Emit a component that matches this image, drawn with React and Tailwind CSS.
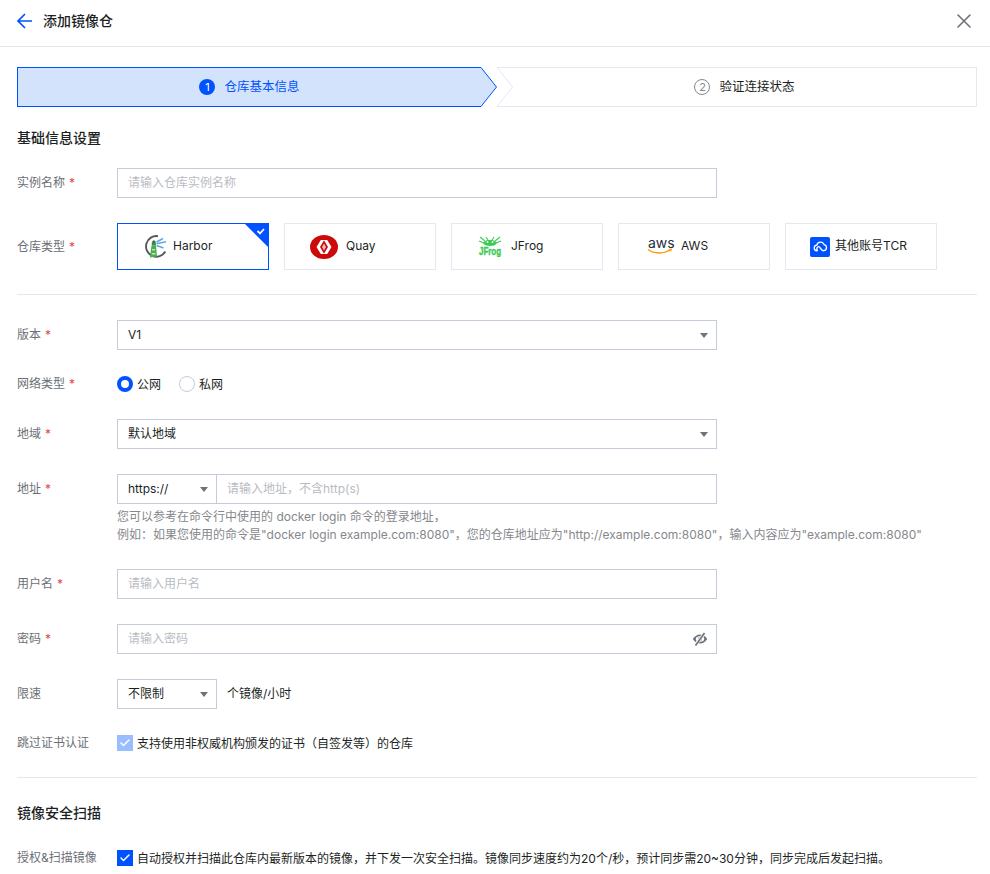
import { X, Check } from "lucide-react";

function Label({ text, required }) {
  return (
    <div className="w-[100px] shrink-0 text-xs leading-5 text-[#6b6f76]">
      {text}
      {required && <span className="ml-1 text-[#e54545]">*</span>}
    </div>
  );
}

function Caret() {
  return <span className="h-0 w-0 border-x-[4px] border-t-[5px] border-x-transparent border-t-[#6f7278]" />;
}

function TextInput({ placeholder, children }) {
  return (
    <div className="flex h-[30px] w-[600px] items-center justify-between border border-[#c5cbdb] pl-[10px] pr-2 text-xs text-[#b9bcc2]">
      {placeholder}
      {children}
    </div>
  );
}

function Select({ value, width }) {
  return (
    <div className={`flex h-[30px] items-center justify-between border border-[#c5cbdb] pl-[10px] pr-[8px] text-xs text-[#1c1f24] ${width}`}>
      {value}
      <Caret />
    </div>
  );
}

function SlashedEye() {
  return (
    <svg width="16" height="14" viewBox="0 0 16 14" fill="none">
      <path d="M.8 7c2-3 4.300-4.500 7.200-4.500S13.200 4 15.200 7c-2 3-4.300 4.500-7.200 4.500S2.800 10 .8 7z" fill="#6f7278" />
      <ellipse cx="8" cy="7" rx="4.200" ry="2.800" fill="#fff" />
      <circle cx="8" cy="7" r="2" fill="#6f7278" />
      <path d="M3 13.500L12.800 .8" stroke="#fff" strokeWidth="3.200" />
      <path d="M3.500 13.500L12.500 1" stroke="#6f7278" strokeWidth="1.700" />
    </svg>
  );
}

function HarborLogo() {
  return (
    <svg width="22" height="23" viewBox="0 0 22 23">
      <path d="M20.300 16.500A10.300 10.300 0 1 1 13 1.200" fill="none" stroke="#55565a" strokeWidth="1.900" />
      <path d="M5 22.500L6.500 10.500h4.500L12 21.500z" fill="#4cae4f" />
      <path d="M7 14h3v1.500H7zM6.800 18h3.800v1.500H6.800z" fill="#bfe3bf" />
      <path d="M6.800 7h4v3.500h-4z" fill="#2f8f3a" />
      <path d="M6.800 7l2-2 2 2z" fill="#55565a" />
      <path d="M11.500 7l6.500-3.500M11.500 8.800l9.500-2M11.500 10.500l7 2.500" stroke="#5fa8e6" strokeWidth="1.500" fill="none" />
    </svg>
  );
}

function QuayLogo() {
  return (
    <svg width="28" height="24" viewBox="0 0 28 24">
      <ellipse cx="14" cy="12" rx="14" ry="12" fill="#cc0a0a" />
      <path d="M6.500 12l4.300-7h3.400L10 12l4.200 7h-3.400z" fill="#fff" />
      <path d="M21.500 12l-4.300-7h-3.400L18 12l-4.200 7h3.400z" fill="#fff" />
      <path d="M14 8.500L12 12l2 3.500 2-3.500z" fill="#f3b5b5" />
    </svg>
  );
}

function JFrogLogo() {
  return (
    <svg width="22" height="19" viewBox="0 0 22 19" className="overflow-visible">
      <path d="M4 6c2-2.500 4-3 7-3s5 .5 7 3c-1 2-3.500 3-7 3S5 8 4 6z" fill="#3ccb54" />
      <path d="M1 0l5 4M21 0l-5 4M0 4l5 2M22 4l-5 2M7 0l2 3M15 0l-2 3" stroke="#3ccb54" strokeWidth="1.100" />
      <circle cx="8.500" cy="5" r=".9" fill="#fff" />
      <circle cx="13.500" cy="5" r=".9" fill="#fff" />
      <text x="0" y="18" textLength="22" lengthAdjust="spacingAndGlyphs" fontSize="10" fontWeight="700" fill="#3ccb54" stroke="#3ccb54" strokeWidth=".4" fontFamily="Liberation Sans, sans-serif">JFrog</text>
    </svg>
  );
}

function AwsLogo() {
  return (
    <svg width="26" height="20" viewBox="0 0 26 20" className="overflow-visible">
      <text x="0" y="10.500" fontSize="14" fontWeight="400" fill="#252f3e" fontFamily="Inter, sans-serif">aws</text>
      <path d="M0 12.500c6 4.500 16 4.500 22 .5" fill="none" stroke="#ff9900" strokeWidth="1.500" />
      <path d="M20.500 12l3.500-.5-1 3.200z" fill="#ff9900" />
    </svg>
  );
}

function TcrLogo() {
  return (
    <span className="flex h-5 w-5 items-center justify-center rounded-[2px] bg-[#0052ff]">
      <svg width="15" height="15" viewBox="0 0 16 16" fill="none" stroke="#fff" strokeWidth="1.400">
        <path d="M4.500 12.500a3 3 0 0 1-.4-6A4 4 0 0 1 11.800 6a3.300 3.300 0 0 1-.3 6.500c-2 0-3-1.600-3.500-2.500S6.500 7.500 5 8.500s-.5 4-.5 4z" />
      </svg>
    </span>
  );
}

function RepoCard({ logo, name, active, pad }) {
  return (
    <div className={`relative flex h-[47px] w-[152px] items-center border text-xs text-[#1c1f24] ${active ? "border-[#0052ff]" : "border-[#e5e8f0]"} ${pad}`}>
      {logo}
      <span className="-mt-px">{name}</span>
      {active && (
        <svg className="absolute -right-px -top-px" width="25" height="25" viewBox="0 0 25 25">
          <path d="M0 0h25v25z" fill="#0052ff" />
          <path d="M13.500 8l2.500 2.500 4-4.500" fill="none" stroke="#fff" strokeWidth="1.800" />
        </svg>
      )}
    </div>
  );
}

function Steps() {
  return (
    <div className="flex h-10 text-[12.5px]">
      <div className="flex w-[464px] items-center justify-center gap-[9px] border border-r-0 border-[#0052ff] bg-[#d4e3fc] text-[#0052ff]">
        <span className="flex h-4 w-4 items-center justify-center rounded-full bg-[#0052ff] text-[11px] text-white">1</span>
        <span>仓库基本信息</span>
      </div>
      <svg width="16" height="40" viewBox="0 0 16 40" className="shrink-0">
        <path d="M0 .5L15.500 20 0 39.500z" fill="#d4e3fc" />
        <path d="M0 .5L15.500 20 0 39.500" fill="none" stroke="#0052ff" strokeWidth="1" />
      </svg>
      <svg width="16" height="40" viewBox="0 0 16 40" className="shrink-0">
        <path d="M0 .5L15.500 20 0 39.500" fill="none" stroke="#e5e8f0" strokeWidth="1" />
        <path d="M0 .5h16M0 39.500h16" stroke="#e5e8f0" strokeWidth="1" />
      </svg>
      <div className="flex flex-1 items-center justify-center gap-[9px] border border-l-0 border-[#e5e8f0] text-[#1c1f24]">
        <span className="flex h-4 w-4 items-center justify-center rounded-full border border-[#85878c] text-[11px] text-[#85878c]">2</span>
        <span>验证连接状态</span>
      </div>
    </div>
  );
}

export default function App() {
  return (
    <div
      className="h-[874px] w-[990px] overflow-hidden bg-white"
      style={{ fontFamily: 'Inter, "Noto Sans CJK SC", sans-serif' }}
    >
      <header className="flex h-[47px] items-center justify-between border-b border-[#e5e8f0] pb-[5px] pl-[13px] pr-[14px]">
        <div className="flex items-center">
          <svg width="24" height="24" viewBox="0 0 24 24" fill="none" stroke="#0052ff" strokeWidth="1.700">
            <path d="M19 12H5.500M12 5l-7 7 7 7" />
          </svg>
          <h1 className="ml-[6px] text-[14px] font-medium text-[#1c1f24]">添加镜像仓</h1>
        </div>
        <X size={24} strokeWidth={1.6} className="text-[#6f7278]" />
      </header>

      <main className="px-[17px] pt-5 pr-[13px]">
        <Steps />

        <h2 className="mt-[21px] h-5 text-[14px] font-medium leading-5 text-[#1c1f24]">基础信息设置</h2>

        <div className="mt-5 flex h-[30px] items-center">
          <Label text="实例名称" required />
          <TextInput placeholder="请输入仓库实例名称" />
        </div>

        <div className="mt-[25px] flex">
          <div className="flex h-[47px] items-center"><Label text="仓库类型" required /></div>
          <div className="flex gap-[15px]">
            <RepoCard active name="Harbor" pad="gap-[6px] pl-[27px]" logo={<HarborLogo />} />
            <RepoCard name="Quay" pad="gap-2 pl-[25px]" logo={<QuayLogo />} />
            <RepoCard name="JFrog" pad="gap-[10px] pl-[27px]" logo={<JFrogLogo />} />
            <RepoCard name="AWS" pad="gap-[7px] pl-[29px]" logo={<AwsLogo />} />
            <RepoCard name="其他账号TCR" pad="gap-[5px] pl-6" logo={<TcrLogo />} />
          </div>
        </div>

        <hr className="mt-6 border-[#e5e8f0]" />

        <div className="mt-[25px] flex h-[30px] items-center">
          <Label text="版本" required />
          <Select value="V1" width="w-[600px]" />
        </div>

        <div className="mt-6 flex h-5 items-center">
          <Label text="网络类型" required />
          <div className="flex items-center text-xs text-[#1c1f24]">
            <span className="h-4 w-4 rounded-full border-[4px] border-[#0052ff]" />
            <span className="ml-1 pt-px">公网</span>
            <span className="ml-[18px] h-4 w-4 rounded-full border border-[#c5cbdb]" />
            <span className="ml-1 pt-px">私网</span>
          </div>
        </div>

        <div className="mt-[25px] flex h-[30px] items-center">
          <Label text="地域" required />
          <Select value="默认地域" width="w-[600px]" />
        </div>

        <div className="mt-[25px] flex h-[30px] items-center">
          <Label text="地址" required />
          <div className="flex w-[600px]">
            <Select value="https://" width="w-[100px]" />
            <div className="flex h-[30px] flex-1 items-center border border-l-0 border-[#c5cbdb] pl-[10px] text-xs text-[#b9bcc2]">
              请输入地址，不含http(s)
            </div>
          </div>
        </div>
        <div className="ml-[100px] mt-[4px] text-xs leading-[18px] text-[#85878c]">
          <p>您可以参考在命令行中使用的 docker login 命令的登录地址，</p>
          <p>例如：如果您使用的命令是"docker login example.com:8080"，您的仓库地址应为"http://example.com:8080"，输入内容应为"example.com:8080"</p>
        </div>

        <div className="mt-[25px] flex h-[30px] items-center">
          <Label text="用户名" required />
          <TextInput placeholder="请输入用户名" />
        </div>

        <div className="mt-[25px] flex h-[30px] items-center">
          <Label text="密码" required />
          <TextInput placeholder="请输入密码">
            <SlashedEye />
          </TextInput>
        </div>

        <div className="mt-[25px] flex h-[30px] items-center">
          <Label text="限速" />
          <Select value="不限制" width="w-[100px]" />
          <span className="ml-[10px] text-xs text-[#1c1f24]">个镜像/小时</span>
        </div>

        <div className="mt-[24px] flex h-5 items-center">
          <Label text="跳过证书认证" />
          <span className="flex h-4 w-4 items-center justify-center bg-[#99bdff]">
            <Check size={12} strokeWidth={3} className="text-white" />
          </span>
          <span className="ml-1 pt-px text-xs text-[#1c1f24]">支持使用非权威机构颁发的证书（自签发等）的仓库</span>
        </div>

        <hr className="mt-6 border-[#e5e8f0]" />

        <h2 className="mt-[25px] h-5 text-[14px] font-medium leading-5 text-[#1c1f24]">镜像安全扫描</h2>

        <div className="mt-[25px] flex h-5 items-center">
          <Label text="授权&扫描镜像" />
          <span className="flex h-4 w-4 items-center justify-center bg-[#0052ff]">
            <Check size={12} strokeWidth={3} className="text-white" />
          </span>
          <span className="ml-1 whitespace-nowrap pt-px text-xs text-[#1c1f24]">自动授权并扫描此仓库内最新版本的镜像，并下发一次安全扫描。镜像同步速度约为20个/秒，预计同步需20~30分钟，同步完成后发起扫描。</span>
        </div>
      </main>
    </div>
  );
}
